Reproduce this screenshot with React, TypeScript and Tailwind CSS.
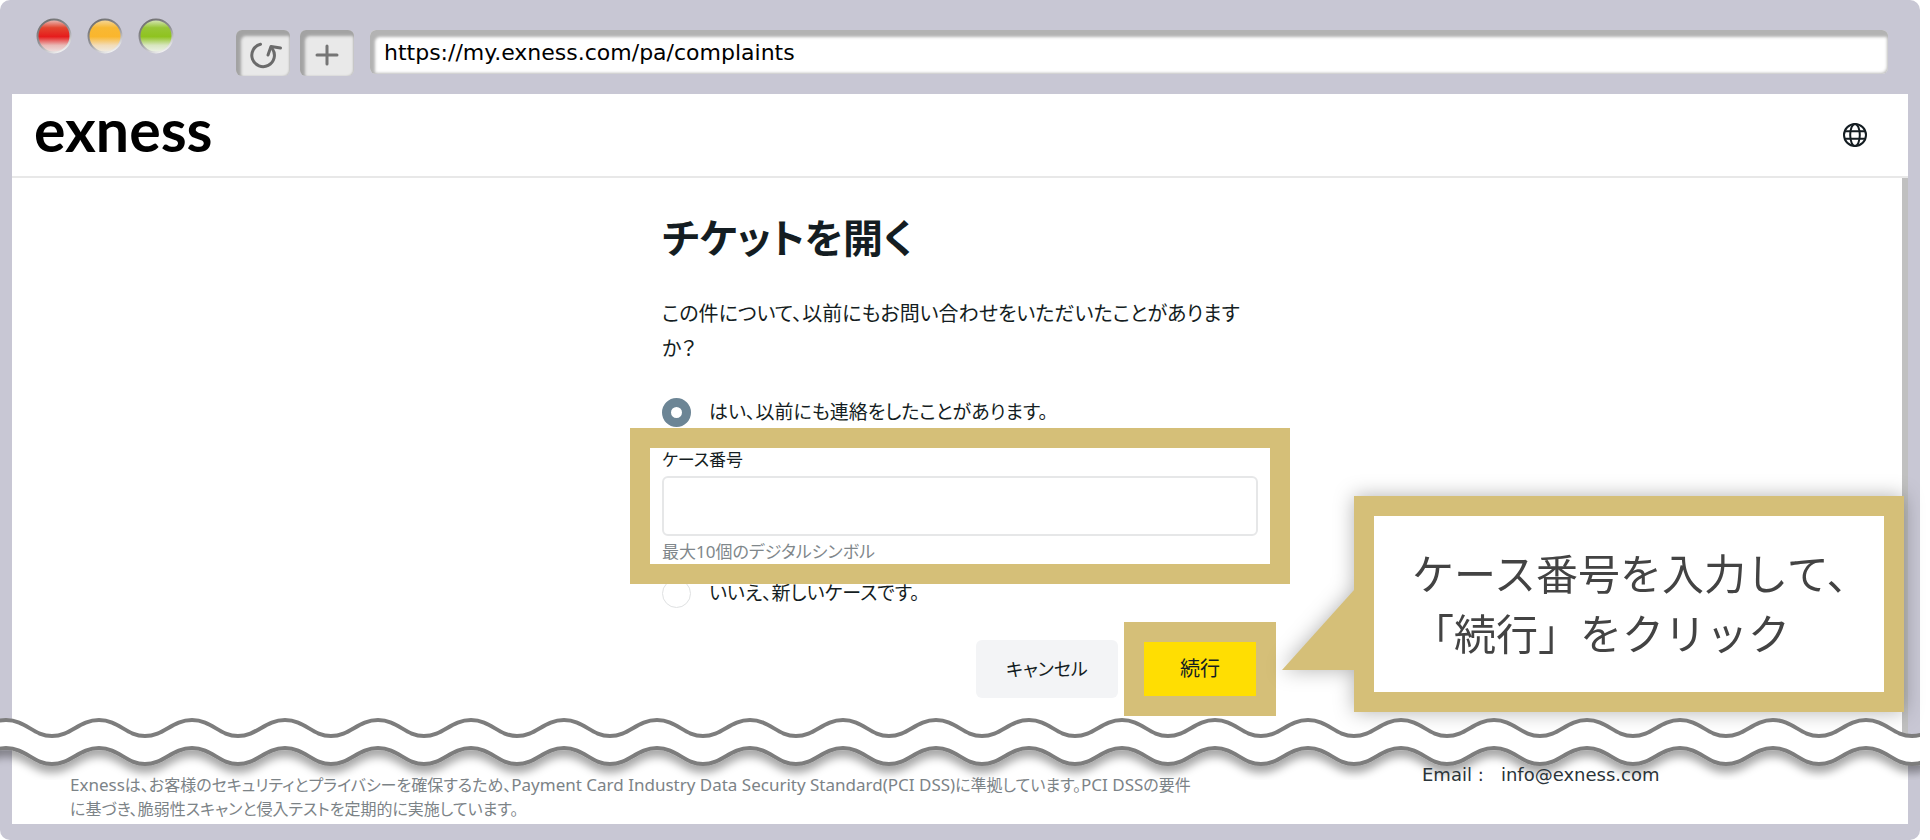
import { useState } from 'react'

const WAVE_PERIOD = 93

// One long sine-like line, starting left of the edge so that the ends are never visible
function wavePath(crest: number, trough: number) {
  let d = `M-87 ${crest}`
  for (let i = 0; i < 44; i++) {
    const x = -87 + i * WAVE_PERIOD
    d += ` C${x + 20} ${crest} ${x + 27} ${trough} ${x + 46} ${trough} S${x + 73} ${crest} ${x + WAVE_PERIOD} ${crest}`
  }
  return d
}

function WaveBreak() {
  const upper = wavePath(4, 20)
  const lower = wavePath(32, 48)
  const end = -87 + 44 * WAVE_PERIOD

  return (
    <svg className="relative -mx-3 -mt-6 -mb-4 block h-16 w-[calc(100%+24px)]" aria-hidden="true">
      <defs>
        <filter id="wave-shadow" x="-5%" y="-50%" width="110%" height="250%">
          <feDropShadow dx="0" dy="7" stdDeviation="4" floodColor="#000" floodOpacity="0.35" />
        </filter>
      </defs>
      <g filter="url(#wave-shadow)">
        <path d={`${lower} L${end} 20 L-87 20 Z`} fill="#fff" />
        <path d={lower} fill="none" stroke="#7d7d7d" strokeWidth="4" />
      </g>
      <path d={`${upper} L${end} 30 L-87 30 Z`} fill="#fff" />
      <path d={upper} fill="none" stroke="#7d7d7d" strokeWidth="4" />
    </svg>
  )
}

function TrafficLights() {
  const lights = [
    { id: 'close', stops: ['#e9c4c0', '#e2452f', '#e61c1c', '#e9b9b6', '#efe3e3'] },
    { id: 'minimize', stops: ['#f6d9a0', '#f8b833', '#fab62d', '#f2dcb8', '#efece6'] },
    { id: 'zoom', stops: ['#dbe8c0', '#97c636', '#8fc31f', '#d8e6c0', '#eef2e9'] }
  ]

  return (
    <div className="flex w-[224px] gap-[15px] pl-6">
      {lights.map(light => (
        <svg key={light.id} viewBox="0 0 36 36" className="size-9" aria-hidden="true">
          <defs>
            <linearGradient id={`light-${light.id}`} x1="0" y1="0" x2="0" y2="1">
              <stop offset="0" stopColor={light.stops[0]} />
              <stop offset="0.25" stopColor={light.stops[1]} />
              <stop offset="0.52" stopColor={light.stops[2]} />
              <stop offset="0.78" stopColor={light.stops[3]} />
              <stop offset="1" stopColor={light.stops[4]} />
            </linearGradient>
            <linearGradient id={`rim-${light.id}`} x1="0.2" y1="0" x2="0.7" y2="1">
              <stop offset="0" stopColor="#6f6f6f" />
              <stop offset="0.5" stopColor="#909095" />
              <stop offset="1" stopColor="#f4f4f4" />
            </linearGradient>
          </defs>
          <circle cx="18" cy="18" r="16.5" fill={`url(#light-${light.id})`} stroke={`url(#rim-${light.id})`} strokeWidth="2" />
        </svg>
      ))}
    </div>
  )
}

function BrowserBar() {
  const [url, setUrl] = useState('https://my.exness.com/pa/complaints')
  const buttonClass =
    'flex h-[46px] w-[54px] items-center justify-center rounded-md bg-[#e9e9e9] shadow-[inset_4px_5px_3px_1px_#a3a3a3,inset_-1px_0_2px_#bbb]'

  return (
    <div className="flex h-[94px] items-start pt-[18px] pr-5">
      <TrafficLights />
      <div className="mt-3 flex min-w-0 flex-1 items-start gap-[10px]">
        <button type="button" aria-label="再読み込み" className={buttonClass}>
          <svg viewBox="0 0 54 46" className="h-[46px] w-[54px]" fill="none" stroke="#6b6b6b" strokeWidth="3" strokeLinecap="round" strokeLinejoin="round">
            <path d="M24.5 14.3A11.3 11.3 0 1 0 36.5 19" />
            <path d="M32 25l3-8.500 9.500 1.500" />
          </svg>
        </button>
        <button type="button" aria-label="新しいタブ" className={buttonClass}>
          <svg viewBox="0 0 54 46" className="h-[46px] w-[54px]" fill="none" stroke="#757575" strokeWidth="3" strokeLinecap="round">
            <path d="M27 16v18M17 25h20" />
          </svg>
        </button>
        <input
          type="text"
          aria-label="アドレス"
          value={url}
          onChange={e => setUrl(e.target.value)}
          className="ml-[6px] h-11 min-w-0 flex-1 rounded-md bg-white pl-[14px] font-['DejaVu_Sans',sans-serif] text-[22px] text-black shadow-[inset_4px_6px_3px_1px_#b3b3b3,inset_-1px_-1px_3px_#bbb] outline-none"
        />
      </div>
    </div>
  )
}

function SiteHeader() {
  return (
    <header className="flex h-[84px] items-center justify-between border-b-2 border-[#e8e8e8] pr-[41px] pl-[22px]">
      <a href="/" className="-mt-3 font-['Lato',sans-serif] text-[59px] leading-none font-bold text-black">
        exness
      </a>
      <button type="button" aria-label="言語">
        <svg viewBox="0 0 24 24" className="size-6" fill="none" stroke="#141d22" strokeWidth="2">
          <circle cx="12" cy="12" r="11" />
          <ellipse cx="12" cy="12" rx="4.800" ry="11" />
          <path d="M2 8.200h20M2 15.800h20" />
        </svg>
      </button>
    </header>
  )
}

function ComplaintForm() {
  const [contacted, setContacted] = useState(true)
  const [caseNumber, setCaseNumber] = useState('')
  const radioClass =
    'size-[29px] shrink-0 appearance-none rounded-full border border-[#dfe1e2] bg-white checked:border-[9px] checked:border-[#6c8595]'

  return (
    <form className="mx-auto w-[596px] text-[#141d22]" onSubmit={e => e.preventDefault()}>
      <h1 className="pt-8 text-[40px] leading-[56px] font-bold">チケットを開く</h1>
      <p className="mt-[30px] text-[20px] leading-[35px]">
        この件について、以前にもお問い合わせをいただいたことがあります
        <br />
        か？
      </p>

      <label className="mt-[30px] flex h-8 items-center gap-[18px] text-[19px]">
        <input type="radio" name="contacted" checked={contacted} onChange={() => setContacted(true)} className={radioClass} />
        はい、以前にも連絡をしたことがあります。
      </label>

      {/* Highlighted field */}
      <div className="relative -mx-8 border-[20px] border-[#d5bf78] bg-white px-3 text-[17px] leading-6">
        <label htmlFor="case-number" className="block">ケース番号</label>
        <input
          id="case-number"
          type="text"
          value={caseNumber}
          maxLength={10}
          aria-describedby="case-hint"
          onChange={e => setCaseNumber(e.target.value)}
          className="mt-1 block h-[60px] w-full rounded-md border-2 border-[#e6e7e8] px-4 outline-none"
        />
        <p id="case-hint" className="mt-1 text-[#80878b]">最大10個のデジタルシンボル</p>
      </div>

      <label className="-mt-[7px] flex h-8 items-center gap-[18px] text-[19px]">
        <input type="radio" name="contacted" checked={!contacted} onChange={() => setContacted(false)} className={radioClass} />
        いいえ、新しいケースです。
      </label>

      <div className="mt-[13px] -mr-[18px] flex items-center justify-end gap-[6px]">
        <button type="button" className="h-[58px] w-[142px] rounded-md bg-[#f3f4f6] text-[18px]">キャンセル</button>
        <div className="border-[20px] border-[#d5bf78]">
          <button type="submit" className="block h-[54px] w-28 bg-[#ffde02] text-[20px]">続行</button>
        </div>
      </div>
    </form>
  )
}

function Callout() {
  return (
    <div className="absolute top-[318px] right-1 w-[550px] drop-shadow-[0_0_10px_rgba(0,0,0,0.3)]">
      <svg viewBox="0 0 74 80" className="absolute top-[94px] -left-[72px] h-20 w-[74px]" aria-hidden="true">
        <path d="M0 80L72 0H74V80Z" fill="#d5bf78" />
      </svg>
      <p className="border-[20px] border-[#d5bf78] bg-white px-[38px] pt-[26px] pb-[30px] font-['Noto_Sans_CJK_JP',sans-serif] text-[42px] leading-[60px] whitespace-nowrap text-[#434343] [font-feature-settings:normal]">
        ケース番号を入力して、
        <br />
        「続行」をクリック
      </p>
    </div>
  )
}

function SiteFooter() {
  return (
    <footer className="relative flex justify-between pb-[3px] pl-[58px]">
      <p className="pt-[9px] text-[16px] leading-6 whitespace-nowrap text-[#7c8387]">
        <span className="text-[17px]">Exness</span>は、お客様のセキュリティとプライバシーを確保するため、
        <span className="text-[17px]">Payment Card Industry Data Security Standard(PCI DSS)</span>に準拠しています。
        <span className="text-[17px]">PCI DSS</span>の要件
        <br />
        に基づき、脆弱性スキャンと侵入テストを定期的に実施しています。
      </p>
      <p className="w-[486px] font-['DejaVu_Sans','Noto_Sans_CJK_JP',sans-serif] text-[18px] leading-[22px] whitespace-pre text-[#2b3439]">
        Email :{'   '}
        <a href="mailto:info@exness.com">info@exness.com</a>
      </p>
    </footer>
  )
}

export default function App() {
  return (
    <div className="bg-white pr-[10px]">
      <div className="rounded-[10px] bg-[#c8c7d4] px-3 pb-4 font-['Noto_Sans','Noto_Sans_CJK_JP',sans-serif] [font-feature-settings:'palt']">
        <BrowserBar />
        <div className="bg-white">
          <SiteHeader />
          <main className="relative border-r-[6px] border-[#c0c0c0] pb-6">
            <div className="-mr-[6px]">
              <ComplaintForm />
            </div>
            <div className="absolute inset-y-0 -right-[6px] left-0">
              <Callout />
            </div>
          </main>
          <WaveBreak />
          <SiteFooter />
        </div>
      </div>
    </div>
  )
}
